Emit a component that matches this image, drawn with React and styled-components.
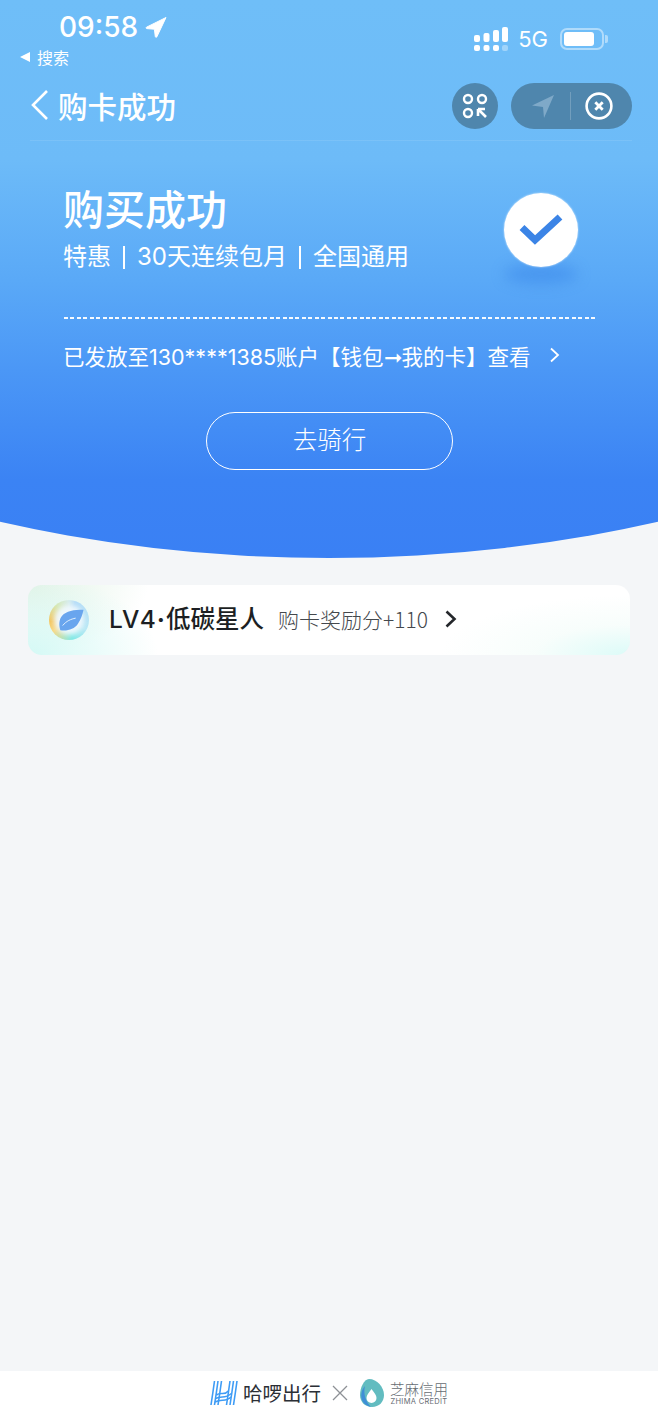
import React from "react";
import styled, { createGlobalStyle } from "styled-components";

const Global = createGlobalStyle`
  html, body { margin: 0; padding: 0; background: #f4f6f8; }
  * { box-sizing: border-box; }
  body { font-family: "Noto Sans CJK SC", "Liberation Sans", sans-serif; }
`;
const Page = styled.div`
  width: 658px; height: 1424px; display: flex; flex-direction: column; overflow: hidden; background: #f4f6f8;
`;
const Hero = styled.section`
  height: 558px; color: #fff; flex: none;
  background: linear-gradient(180deg, #6fbef8 0px, #6dbbf8 160px, #5aa9f7 280px, #4b97f6 370px, #3b83f4 480px, #3a80f4 558px);
  clip-path: ellipse(900px 522px at 50% 36px);
`;
const Status = styled.div`
  height: 72px; padding: 10px 54px 0 19px; display: flex; justify-content: space-between; align-items: flex-start;
`;
const StatusLeft = styled.div`display: flex; flex-direction: column; gap: 3px;`;
const TimeRow = styled.div`
  display: flex; align-items: center; gap: 7px; padding-left: 40px; height: 34px;
  font: 500 28px/34px "Inter", sans-serif; letter-spacing: 0;
`;
const BackHint = styled.div`
  display: flex; align-items: center; gap: 6px; font-size: 16px; line-height: 20px; height: 20px;
`;
const StatusRight = styled.div`
  display: flex; align-items: center; gap: 10px; padding-top: 16px;
`;
const FiveG = styled.span`font: 400 22px/26px "Inter", sans-serif;`;
const Battery = styled.div`
  width: 44px; height: 22px; border: 2px solid rgba(255,255,255,.45); border-radius: 7px; padding: 2px; margin-left: 2px; position: relative;
  &::after { content: ""; position: absolute; right: -6px; top: 5px; width: 3px; height: 8px; border-radius: 0 2px 2px 0; background: rgba(255,255,255,.45); }
`;
const BatteryFill = styled.div`width: 30px; height: 14px; background: #fff; border-radius: 3px;`;
const Nav = styled.div`
  height: 69px; margin: 0 26px 0 30px; display: flex; align-items: center; justify-content: space-between;
  border-bottom: 1px solid rgba(255,255,255,.09);
`;
const NavTitle = styled.div`
  display: flex; align-items: center; gap: 8px; font-size: 29.5px; font-weight: 500; line-height: 40px; margin-top: -2px;
`;
const NavActions = styled.div`display: flex; align-items: center; gap: 13px;`;
const RoundBtn = styled.div`
  width: 46px; height: 46px; border-radius: 50%; background: #4f86ad; display: flex; align-items: center; justify-content: center;
`;
const Capsule = styled.div`
  width: 121px; height: 46px; border-radius: 23px; background: #4f86ad; display: flex; align-items: center;
`;
const CapsuleHalf = styled.div`
  flex: 1; height: 100%; display: flex; align-items: center; justify-content: center;
  padding: ${(p) => (p.$side === "left" ? "0 0 0 4px" : "0 6px 0 0")};
`;
const CapsuleDivider = styled.div`width: 1px; height: 28px; background: rgba(255,255,255,.2);`;
const Content = styled.div`
  padding: 43px 63px 0 64px; font-family: "Inter", "Noto Sans CJK SC", sans-serif;
`;
const Summary = styled.div`display: flex; justify-content: space-between; height: 133px;`;
const Headline = styled.h1`margin: 0 0 0 -1px; font-size: 41px; line-height: 52px; font-weight: 500; letter-spacing: 0;`;
const Sub = styled.div`
  font-size: 24px; line-height: 34px; margin: 4px 0 0 -1px; white-space: nowrap; display: flex; align-items: center;
`;
const Sep = styled.i`display: inline-block; width: 2px; height: 23px; background: #fff; margin: 0 12px;`;
const Badge = styled.div`
  position: relative; width: 74px; height: 74px; margin: 9px 17px 0 0; border-radius: 50%;
  background: radial-gradient(circle, #fff 80%, #f2f8ff 100%); box-shadow: 0 0 2px rgba(255,255,255,.8); display: flex; align-items: center; justify-content: center;
  &::after { content: ""; position: absolute; left: 0; right: 0; bottom: -17px; height: 20px; border-radius: 50%; background: rgba(46,120,230,.38); filter: blur(7px); z-index: -1; }
`;
const Dashed = styled.div`
  height: 2px; background: repeating-linear-gradient(90deg, rgba(255,255,255,.95) 0 4px, transparent 4px 6.427px);
`;
const Notice = styled.div`
  display: flex; align-items: center; height: 38px; margin: 17px 0 0 -1px; font-size: 21.5px; white-space: nowrap;
`;
const NoticeChevron = styled.svg`margin-left: 18px;`;
const RideButton = styled.div`
  width: 247px; height: 58px; margin: 38px 0 0 142px; padding-bottom: 5px; border: 1px solid #fff; border-radius: 29px;
  display: flex; align-items: center; justify-content: center; font-size: 24.5px; font-weight: 300;
`;
const Main = styled.main`flex: 1; padding: 27px 28px 0;`;
const LevelCard = styled.div`
  height: 70px; border-radius: 14px; display: flex; align-items: center; padding-left: 21px; color: #1c1f23;
  background:
    radial-gradient(130px 80px at 0% 100%, #d4f9f5 0%, rgba(212,249,245,0) 100%),
    radial-gradient(120px 70px at 0% 0%, #e2f3e6 0%, rgba(226,243,230,0) 100%),
    radial-gradient(190px 60px at 100% 100%, #dcfbf8 0%, rgba(240,252,248,.5) 50%, rgba(240,252,248,0) 100%),
    #fff;
`;
const LeafBall = styled.div`
  position: relative; width: 40px; height: 40px; border-radius: 50%; margin-right: 20px; overflow: hidden;
  display: flex; align-items: center; justify-content: center;
  background: conic-gradient(from 20deg, #b5dcf8, #b8e8f5 100deg, #7fe9e6 150deg, #f8d985 215deg, #f5c55c 245deg, #d5e8b5 300deg, #d6ecec 340deg, #b5dcf8);
`;
const LeafGlow = styled.div`
  position: absolute; left: 5px; top: 5px; width: 30px; height: 30px; border-radius: 50%; background: #eef7fc; filter: blur(2.5px);
`;
const LeafIcon = styled.svg`position: relative; margin: -1px 0 0 3px;`;
const LevelName = styled.span`font-size: 24.5px; font-weight: 500; line-height: 32px; white-space: nowrap; margin-bottom: 3px;`;
const LevelLatin = styled.span`font-family: "Inter", sans-serif; font-weight: 500; letter-spacing: 1px;`;
const LevelDot = styled.span`font-family: "Inter", sans-serif; font-weight: 700; margin: 0 1px 0 0;`;
const Bonus = styled.span`font-size: 21px; font-weight: 300; color: #44484d; margin: 0 0 3px 14px; white-space: nowrap;`;
const CardChevron = styled.svg`margin: 0 0 2px 16px;`;
const Footer = styled.footer`
  height: 53px; background: #fff; flex: none; display: flex; align-items: center; justify-content: center; padding: 0 0 10px 0; gap: 10px;
`;
const Brand = styled.div`display: flex; align-items: center; gap: 5px; font-size: 19.5px; font-weight: 400; color: #2b2f36; white-space: nowrap;`;
const Zhima = styled.div`display: flex; align-items: center; gap: 5px;`;
const ZhimaText = styled.div`display: flex; flex-direction: column; align-items: center; color: #666c72;`;
const ZhimaCn = styled.span`font-size: 14.5px; line-height: 17px; font-weight: 300; white-space: nowrap;`;
const ZhimaEn = styled.span`font: 400 7.5px/9px "Inter", sans-serif; letter-spacing: .3px; white-space: nowrap;`;

export default function App() {
  return (
    <Page>
      <Global />
      <Hero>
        <Status>
          <StatusLeft>
            <TimeRow>
              09:58
              <svg width="22" height="22" viewBox="0 0 22 22"><path d="M21 1.500 1.500 11.200c-.7.4-.5 1.300.3 1.400l7.600.6.9 7.400c.1.8 1.100 1 1.500.3Z" fill="#fff" stroke="#fff" strokeLinejoin="round" /></svg>
            </TimeRow>
            <BackHint>
              <svg width="12" height="12" viewBox="0 0 12 12"><path d="M11 1v10L1 6Z" fill="#fff" /></svg>
              搜索
            </BackHint>
          </StatusLeft>
          <StatusRight>
            <svg width="34" height="24" viewBox="0 0 34 24" fill="#fff">
              <rect x="0" y="8" width="6" height="7" rx="2" />
              <rect x="9.500" y="6" width="6" height="9" rx="2" />
              <rect x="19" y="3" width="6" height="12" rx="2" />
              <rect x="28" y="0" width="6" height="15" rx="2" />
              <rect x="0" y="18" width="6" height="6" rx="2" />
              <rect x="9.500" y="18" width="6" height="6" rx="2" />
              <rect x="19" y="18" width="6" height="6" rx="2" />
              <rect x="28" y="18" width="6" height="6" rx="2" fill="rgba(255,255,255,.35)" />
            </svg>
            <FiveG>5G</FiveG>
            <Battery><BatteryFill /></Battery>
          </StatusRight>
        </Status>
        <Nav>
          <NavTitle>
            <svg width="20" height="32" viewBox="0 0 20 32"><path d="M17 2 3 16l14 14" fill="none" stroke="#fff" strokeWidth="2.600" /></svg>
            购卡成功
          </NavTitle>
          <NavActions>
            <RoundBtn>
              <svg width="26" height="26" viewBox="0 0 26 26" fill="none" stroke="#fff" strokeWidth="2.400">
                <circle cx="6" cy="6" r="4" />
                <circle cx="20" cy="6" r="4" />
                <circle cx="6" cy="20" r="4" />
                <path d="M16 16h7M16 16v7M16.500 16.500 24 24" strokeWidth="2.600" />
              </svg>
            </RoundBtn>
            <Capsule>
              <CapsuleHalf $side="left">
                <svg width="24" height="24" viewBox="0 0 24 24"><path d="M23 1 1 11.500l11 1.500 1 11Z" fill="#7fa9c8" /></svg>
              </CapsuleHalf>
              <CapsuleDivider />
              <CapsuleHalf $side="right">
                <svg width="28" height="28" viewBox="0 0 28 28" fill="none" stroke="#fff">
                  <circle cx="14" cy="14" r="12.400" strokeWidth="2.600" />
                  <path d="M10.300 10.300l7.400 7.400M17.700 10.300l-7.400 7.400" strokeWidth="2.800" />
                </svg>
              </CapsuleHalf>
            </Capsule>
          </NavActions>
        </Nav>
        <Content>
          <Summary>
            <div>
              <Headline>购买成功</Headline>
              <Sub>特惠<Sep />30天连续包月<Sep />全国通用</Sub>
            </div>
            <Badge>
              <svg width="44" height="34" viewBox="0 0 44 34"><path d="M3 14.500 16 27 41 4" fill="none" stroke="#3b84e6" strokeWidth="7" /></svg>
            </Badge>
          </Summary>
          <Dashed />
          <Notice>
            已发放至130****1385账户【钱包➞我的卡】查看
            <NoticeChevron width="11" height="16" viewBox="0 0 11 16"><path d="M2 1.500 9 8l-7 6.500" fill="none" stroke="#fff" strokeWidth="1.800" /></NoticeChevron>
          </Notice>
          <RideButton>去骑行</RideButton>
        </Content>
      </Hero>
      <Main>
        <LevelCard>
          <LeafBall>
            <LeafGlow />
            <LeafIcon width="26" height="24" viewBox="0 0 28 24">
              <path d="M27.500 1C17 1 9 2 4 8 1.500 11 .5 17 2.500 23c8 1 15-1 19-7 3-4 5-10 6-15Z" fill="#69a5ee" />
              <path d="M5 18c4-5 9-7 14-8" fill="none" stroke="#e8f4ff" strokeWidth="1" />
            </LeafIcon>
          </LeafBall>
          <LevelName><LevelLatin>LV4</LevelLatin><LevelDot>·</LevelDot>低碳星人</LevelName>
          <Bonus>购卡奖励分+110</Bonus>
          <CardChevron width="13" height="18" viewBox="0 0 13 18"><path d="M2.500 1.500 10.500 9l-8 7.500" fill="none" stroke="#24272b" strokeWidth="2.600" /></CardChevron>
        </LevelCard>
      </Main>
      <Footer>
        <Brand>
          <svg width="28" height="26" viewBox="0 0 28 26" fill="none" stroke="#3f9cf5" strokeWidth="1.600">
            <path d="M4.500 1 2.800 13M8 1 6.300 13M11.500 1 9.800 13" />
            <path d="M2.800 13 1 25M6.300 13 4.500 25M9.800 13 8 25" />
            <path d="M20 1l-1.700 12M23.500 1l-1.700 12M27 1l-1.700 12" />
            <path d="M18.300 13 16.500 25M21.800 13 20 25M25.300 13 23.500 25" />
            <path d="M6.300 15c5-3.500 8 1 12-4M5.500 18.500c6-3.500 9 1 15.800-5M5 22c7-4 10 1 16-5" />
          </svg>
          哈啰出行
        </Brand>
        <svg width="18" height="18" viewBox="0 0 18 18"><path d="M2 2l14 14M16 2 2 16" stroke="#8d9196" strokeWidth="1.300" /></svg>
        <Zhima>
          <svg width="26" height="30" viewBox="0 0 26 30">
            <path d="M10 1c8 0 15 8 15 16 0 7-5 12-12 12S1 24 1 17C1 10 5 1 10 1Z" fill="#62bcc0" />
            <path d="M6 8C2 12 1 19 4 24c2 3 5 4 8 5C7 24 4 16 6 8Z" fill="#3f8fd6" />
            <path d="M12.500 11c3 4 5 6 5 9a5 5 0 0 1-10 0c0-3 2-5 5-9Z" fill="#fff" />
          </svg>
          <ZhimaText>
            <ZhimaCn>芝麻信用</ZhimaCn>
            <ZhimaEn>ZHIMA CREDIT</ZhimaEn>
          </ZhimaText>
        </Zhima>
      </Footer>
    </Page>
  );
}
